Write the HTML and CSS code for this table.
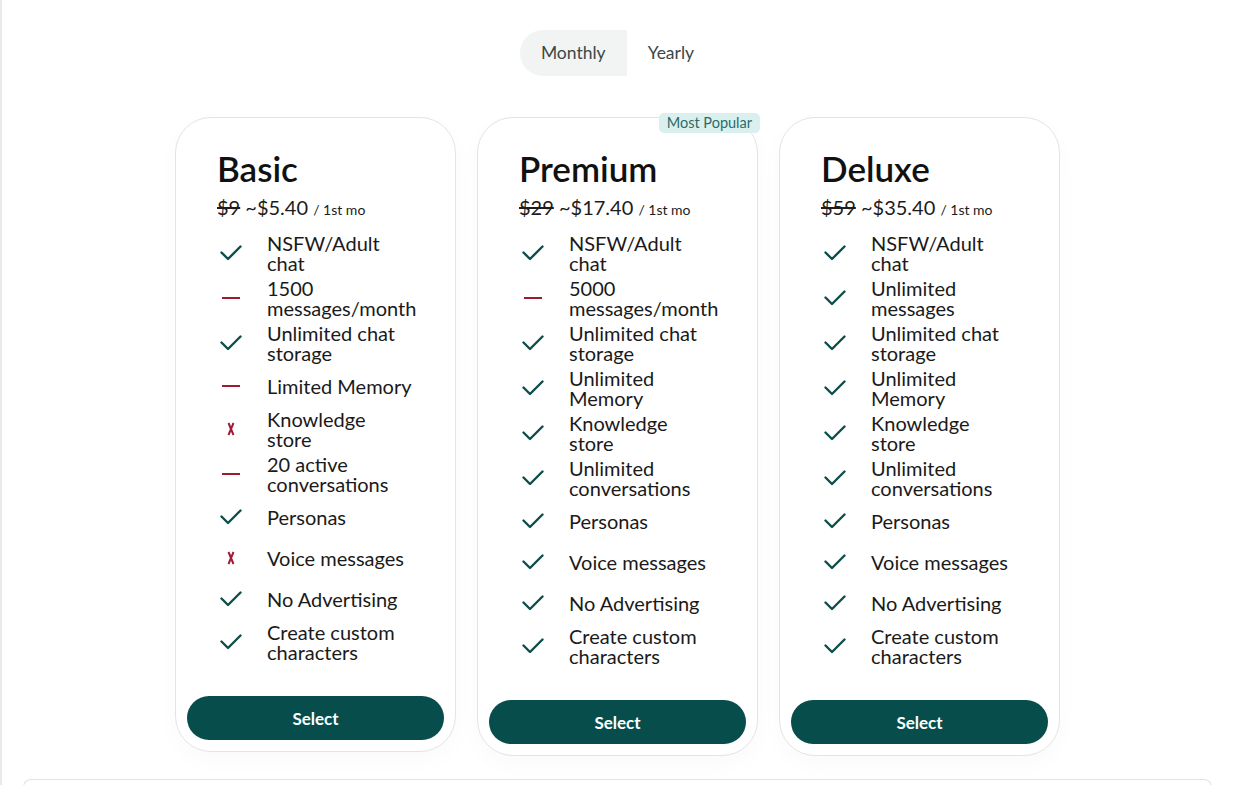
FILE: index.html
```html
<!DOCTYPE html>
<html lang="en">
<head>
<meta charset="utf-8">
<title>Plans</title>
<link rel="stylesheet" href="styles.css">
</head>
<body>
<div class="page">
  <div class="toggle">
    <div class="tab active">Monthly</div>
    <div class="tab">Yearly</div>
  </div>

  <div class="plans">
    <div class="card">
      <div class="body">
        <h2 class="name">Basic</h2>
        <div class="price"><s>$9</s> ~$5.40 <span class="per">/ 1st mo</span></div>
        <ul class="features">
          <li><span class="ic"><svg class="check" viewBox="0 0 22 16"><path d="M1.5 7.5 L8 14 L20.5 1.5"/></svg></span><span class="tx">NSFW/Adult chat</span></li>
          <li><span class="ic"><span class="dash"></span></span><span class="tx">1500 messages/month</span></li>
          <li><span class="ic"><svg class="check" viewBox="0 0 22 16"><path d="M1.5 7.5 L8 14 L20.5 1.5"/></svg></span><span class="tx">Unlimited chat storage</span></li>
          <li><span class="ic"><span class="dash"></span></span><span class="tx">Limited Memory</span></li>
          <li><span class="ic"><svg class="cross" viewBox="0 0 8 14"><path d="M1.5 1 L6.5 13 M6.5 1 L1.5 13"/></svg></span><span class="tx">Knowledge store</span></li>
          <li><span class="ic"><span class="dash"></span></span><span class="tx">20 active conversations</span></li>
          <li><span class="ic"><svg class="check" viewBox="0 0 22 16"><path d="M1.5 7.5 L8 14 L20.5 1.5"/></svg></span><span class="tx">Personas</span></li>
          <li><span class="ic"><svg class="cross" viewBox="0 0 8 14"><path d="M1.5 1 L6.5 13 M6.5 1 L1.5 13"/></svg></span><span class="tx">Voice messages</span></li>
          <li><span class="ic"><svg class="check" viewBox="0 0 22 16"><path d="M1.5 7.5 L8 14 L20.5 1.5"/></svg></span><span class="tx">No Advertising</span></li>
          <li><span class="ic"><svg class="check" viewBox="0 0 22 16"><path d="M1.5 7.5 L8 14 L20.5 1.5"/></svg></span><span class="tx">Create custom characters</span></li>
        </ul>
      </div>
      <button class="select">Select</button>
    </div>

    <div class="card">
      <span class="badge">Most Popular</span>
      <div class="body">
        <h2 class="name">Premium</h2>
        <div class="price"><s>$29</s> ~$17.40 <span class="per">/ 1st mo</span></div>
        <ul class="features">
          <li><span class="ic"><svg class="check" viewBox="0 0 22 16"><path d="M1.5 7.5 L8 14 L20.5 1.5"/></svg></span><span class="tx">NSFW/Adult chat</span></li>
          <li><span class="ic"><span class="dash"></span></span><span class="tx">5000 messages/month</span></li>
          <li><span class="ic"><svg class="check" viewBox="0 0 22 16"><path d="M1.5 7.5 L8 14 L20.5 1.5"/></svg></span><span class="tx">Unlimited chat storage</span></li>
          <li><span class="ic"><svg class="check" viewBox="0 0 22 16"><path d="M1.5 7.5 L8 14 L20.5 1.5"/></svg></span><span class="tx">Unlimited Memory</span></li>
          <li><span class="ic"><svg class="check" viewBox="0 0 22 16"><path d="M1.5 7.5 L8 14 L20.5 1.5"/></svg></span><span class="tx">Knowledge store</span></li>
          <li><span class="ic"><svg class="check" viewBox="0 0 22 16"><path d="M1.5 7.5 L8 14 L20.5 1.5"/></svg></span><span class="tx">Unlimited conversations</span></li>
          <li><span class="ic"><svg class="check" viewBox="0 0 22 16"><path d="M1.5 7.5 L8 14 L20.5 1.5"/></svg></span><span class="tx">Personas</span></li>
          <li><span class="ic"><svg class="check" viewBox="0 0 22 16"><path d="M1.5 7.5 L8 14 L20.5 1.5"/></svg></span><span class="tx">Voice messages</span></li>
          <li><span class="ic"><svg class="check" viewBox="0 0 22 16"><path d="M1.5 7.5 L8 14 L20.5 1.5"/></svg></span><span class="tx">No Advertising</span></li>
          <li><span class="ic"><svg class="check" viewBox="0 0 22 16"><path d="M1.5 7.5 L8 14 L20.5 1.5"/></svg></span><span class="tx">Create custom characters</span></li>
        </ul>
      </div>
      <button class="select">Select</button>
    </div>

    <div class="card">
      <div class="body">
        <h2 class="name">Deluxe</h2>
        <div class="price"><s>$59</s> ~$35.40 <span class="per">/ 1st mo</span></div>
        <ul class="features">
          <li><span class="ic"><svg class="check" viewBox="0 0 22 16"><path d="M1.5 7.5 L8 14 L20.5 1.5"/></svg></span><span class="tx">NSFW/Adult chat</span></li>
          <li><span class="ic"><svg class="check" viewBox="0 0 22 16"><path d="M1.5 7.5 L8 14 L20.5 1.5"/></svg></span><span class="tx">Unlimited messages</span></li>
          <li><span class="ic"><svg class="check" viewBox="0 0 22 16"><path d="M1.5 7.5 L8 14 L20.5 1.5"/></svg></span><span class="tx">Unlimited chat storage</span></li>
          <li><span class="ic"><svg class="check" viewBox="0 0 22 16"><path d="M1.5 7.5 L8 14 L20.5 1.5"/></svg></span><span class="tx">Unlimited Memory</span></li>
          <li><span class="ic"><svg class="check" viewBox="0 0 22 16"><path d="M1.5 7.5 L8 14 L20.5 1.5"/></svg></span><span class="tx">Knowledge store</span></li>
          <li><span class="ic"><svg class="check" viewBox="0 0 22 16"><path d="M1.5 7.5 L8 14 L20.5 1.5"/></svg></span><span class="tx">Unlimited conversations</span></li>
          <li><span class="ic"><svg class="check" viewBox="0 0 22 16"><path d="M1.5 7.5 L8 14 L20.5 1.5"/></svg></span><span class="tx">Personas</span></li>
          <li><span class="ic"><svg class="check" viewBox="0 0 22 16"><path d="M1.5 7.5 L8 14 L20.5 1.5"/></svg></span><span class="tx">Voice messages</span></li>
          <li><span class="ic"><svg class="check" viewBox="0 0 22 16"><path d="M1.5 7.5 L8 14 L20.5 1.5"/></svg></span><span class="tx">No Advertising</span></li>
          <li><span class="ic"><svg class="check" viewBox="0 0 22 16"><path d="M1.5 7.5 L8 14 L20.5 1.5"/></svg></span><span class="tx">Create custom characters</span></li>
        </ul>
      </div>
      <button class="select">Select</button>
    </div>
  </div>

  <div class="footer-box"></div>
</div>
</body>
</html>
```

FILE: styles.css
```css
* { box-sizing: border-box; }
html, body { margin: 0; padding: 0; background: #fff; }
body {
  font-family: Lato, "Noto Sans", sans-serif;
  color: #151515;
  overflow: hidden;
  height: 785px;
}
.page {
  border-left: 2px solid #e9e9e9;
  min-height: 785px;
  padding-top: 30px;
}
.toggle {
  display: flex;
  justify-content: center;
}
.tab {
  height: 46px;
  line-height: 46px;
  padding: 0 21px;
  font-size: 17.5px;
  color: #3b4747;
}
.tab.active {
  background: #f2f4f4;
  border-radius: 23px 0 0 23px;
}
.plans {
  display: flex;
  justify-content: center;
  align-items: flex-start;
  gap: 21px;
  margin-top: 41px;
}
.card {
  position: relative;
  width: 281px;
  border: 1px solid #e4e4e4;
  border-radius: 36px;
  padding: 11px;
  background: #fff;
  box-shadow: 0 8px 24px rgba(0,0,0,0.025);
}
.badge {
  position: absolute;
  top: -5px;
  right: -3px;
  height: 20px;
  line-height: 20px;
  padding: 0 8px;
  font-size: 14.5px;
  color: #2a6c67;
  background: #daf0ee;
  border-radius: 5px;
}
.body {
  padding: 19px 30px 0;
}
.name {
  margin: 0;
  font-size: 35px;
  line-height: 40px;
  font-weight: 600;
  color: #111;
}
.price {
  margin-top: 7px;
  font-size: 20px;
  line-height: 24px;
  color: #1c1c1c;
}
.price s { text-decoration-thickness: 1.5px; }
.per { font-size: 14px; }
.features {
  list-style: none;
  margin: 11px 0 0;
  padding: 0;
  display: flex;
  flex-direction: column;
  gap: 5px;
}
.features li {
  display: flex;
  align-items: center;
  min-height: 36px;
}
.ic {
  flex: 0 0 50px;
  display: flex;
  align-items: center;
}
.tx {
  width: 145px;
  font-size: 20px;
  line-height: 20px;
  color: #1a1a1a;
}
.check {
  width: 22px;
  height: 16px;
  margin-left: 3px;
  fill: none;
  stroke: #0d4e4b;
  stroke-width: 2.4;
  stroke-linecap: round;
  stroke-linejoin: round;
}
.dash {
  display: block;
  width: 18px;
  height: 2px;
  margin-left: 5px;
  background: #9e1a31;
}
.cross {
  width: 8px;
  height: 14px;
  margin-left: 10px;
  fill: none;
  stroke: #a21a3a;
  stroke-width: 2;
}
.select {
  display: block;
  width: 100%;
  height: 44px;
  margin-top: 34px;
  border: none;
  border-radius: 22px;
  background: #074d4c;
  color: #fff;
  font-family: Lato, "Noto Sans", sans-serif;
  font-size: 17px;
  font-weight: 700;
  cursor: pointer;
}
.footer-box {
  margin: 23px 21px 0 21px;
  height: 30px;
  border: 1px solid #e2e2e2;
  border-bottom: none;
  border-radius: 8px 8px 0 0;
}
```
